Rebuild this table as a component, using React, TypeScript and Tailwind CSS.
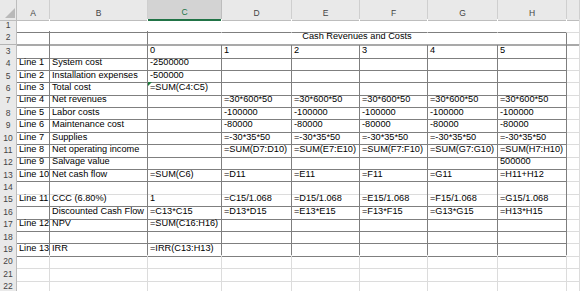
import React from 'react'

const GRID = 'grid grid-cols-[17px_33px_98px_74px_70px_68px_68px_70px_69px_1fr]'
const LETTERS = ['A', 'B', 'C', 'D', 'E', 'F', 'G', 'H', '']

const five = (v: string) => [v, v, v, v, v]

// rows 3..22, columns A..H
const DATA: Record<number, string[]> = {
  3: ['', '', '0', '1', '2', '3', '4', '5'],
  4: ['Line 1', 'System cost', '-2500000'],
  5: ['Line 2', 'Installation expenses', '-500000'],
  6: ['Line 3', 'Total cost', '=SUM(C4:C5)'],
  7: ['Line 4', 'Net revenues', '', ...five('=30*600*50')],
  8: ['Line 5', 'Labor costs', '', ...five('-100000')],
  9: ['Line 6', 'Maintenance cost', '', ...five('-80000')],
  10: ['Line 7', 'Supplies', '', ...five('=-30*35*50')],
  11: ['Line 8', 'Net operating income', '', '=SUM(D7:D10)', '=SUM(E7:E10)', '=SUM(F7:F10)', '=SUM(G7:G10)', '=SUM(H7:H10)'],
  12: ['Line 9', 'Salvage value', '', '', '', '', '', '500000'],
  13: ['Line 10', 'Net cash flow', '=SUM(C6)', '=D11', '=E11', '=F11', '=G11', '=H11+H12'],
  15: ['Line 11', 'CCC (6.80%)', '1', '=C15/1.068', '=D15/1.068', '=E15/1.068', '=F15/1.068', '=G15/1.068'],
  16: ['', 'Discounted Cash Flow', '=C13*C15', '=D13*D15', '=E13*E15', '=F13*F15', '=G13*G15', '=H13*H15'],
  17: ['Line 12', 'NPV', '=SUM(C16:H16)'],
  19: ['Line 13', 'IRR', '=IRR(C13:H13)'],
}

function RowHeader({ n, freeze }: { n: number; freeze?: boolean }) {
  return (
    <div
      className={`flex items-center justify-center bg-[#e9e9e9] border-r border-r-[#bdbdbd] text-[8.5px] text-[#444] ${
        freeze ? 'border-b-2 border-b-[#b4b4b4]' : 'border-b border-b-[#d6d6d6]'
      }`}
    >
      {n}
    </div>
  )
}

function Cell({ row, col, text }: { row: number; col: number; text: string }) {
  const inTable = row >= 2 && row <= 19 && col <= 7
  const right = inTable
    ? 'border-r border-r-[#7f7f7f]'
    : row === 1 && col <= 7
      ? 'border-r border-r-white'
      : 'border-r border-r-[#dcdcdc]'
  let bottom = 'border-b border-b-[#dcdcdc]'
  if (row === 1 && col <= 7) bottom = 'border-b border-b-[#7f7f7f]'
  else if (row === 2) bottom = 'border-b-2 border-b-[#a9a9a9]'
  else if (inTable && row !== 14) bottom = 'border-b border-b-[#7f7f7f]'

  return (
    <div className={`relative overflow-hidden whitespace-nowrap px-[2px] leading-[11.4px] ${right} ${bottom}`}>
      {row === 6 && col === 2 && (
        <span className="absolute left-0 top-0 w-0 h-0 border-t-[4px] border-t-[#1e7a3c] border-r-[4px] border-r-transparent" />
      )}
      {text}
    </div>
  )
}

export default function App() {
  const rows = Array.from({ length: 22 }, (_, i) => i + 1)

  return (
    <div className="w-[580px] h-[291px] overflow-hidden bg-white text-black font-['Liberation_Sans',Arial,sans-serif] text-[9.2px]">
      {/* column headers */}
      <div className={`${GRID} h-[19px]`}>
        <div className="relative bg-[#e9e9e9] border-r border-r-[#bdbdbd] border-b border-b-[#bdbdbd]">
          <svg className="absolute left-0 top-0" width="17" height="19" viewBox="0 0 17 19">
            <polygon points="5,18 15,18 15,8" fill="#b9b9b9" />
          </svg>
        </div>
        {LETTERS.map((l, i) =>
          l === 'C' ? (
            <div
              key={i}
              className="flex items-center justify-center pt-[6px] bg-[#d3d3d3] border-r border-r-[#bdbdbd] border-b-2 border-b-[#217346] text-[8.5px] text-[#217346]"
            >
              {l}
            </div>
          ) : (
            <div
              key={i}
              className="flex items-center justify-center pt-[6px] bg-[#e9e9e9] border-r border-r-[#cfcfcf] border-b border-b-[#bdbdbd] text-[8.5px] text-[#444]"
            >
              {l}
            </div>
          ),
        )}
      </div>

      {rows.map((r) => {
        if (r === 2) {
          return (
            <div key={r} className={`${GRID} h-[13.4px]`}>
              <RowHeader n={r} freeze />
              <Cell row={2} col={0} text="" />
              <Cell row={2} col={1} text="" />
              <div className="col-span-6 text-center whitespace-nowrap leading-[11.4px] border-r border-r-[#7f7f7f] border-b-2 border-b-[#a9a9a9]">
                Cash Revenues and Costs
              </div>
              <Cell row={2} col={8} text="" />
            </div>
          )
        }
        const vals = DATA[r] ?? []
        return (
          <div key={r} className={`${GRID} h-[12.4px]`}>
            <RowHeader n={r} />
            {Array.from({ length: 9 }, (_, c) => (
              <Cell key={c} row={r} col={c} text={vals[c] ?? ''} />
            ))}
          </div>
        )
      })}
    </div>
  )
}
